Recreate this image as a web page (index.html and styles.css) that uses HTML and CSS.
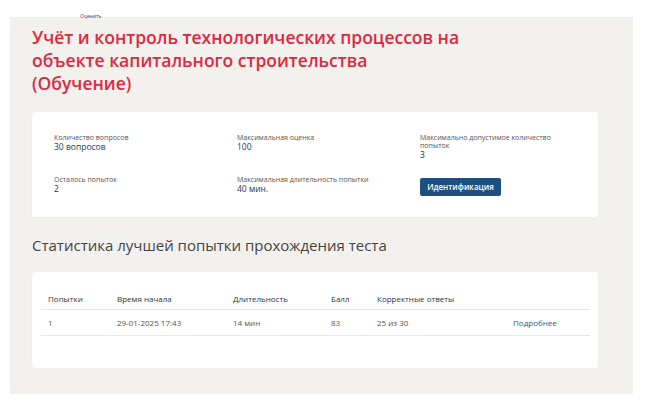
FILE: index.html
```html
<!DOCTYPE html>
<html lang="ru">
<head>
<meta charset="utf-8">
<title>Тест</title>
<link rel="stylesheet" href="styles.css">
</head>
<body>
<div class="topbar"><span class="rate">Оценить</span></div>
<main class="panel">
  <h1 class="title">Учёт и контроль технологических процессов на объекте капитального строительства (Обучение)</h1>
  <section class="card info">
    <div class="item">
      <div class="label">Количество вопросов</div>
      <div class="value">30 вопросов</div>
    </div>
    <div class="item">
      <div class="label">Максимальная оценка</div>
      <div class="value">100</div>
    </div>
    <div class="item">
      <div class="label">Максимально допустимое количество попыток</div>
      <div class="value">3</div>
    </div>
    <div class="item">
      <div class="label">Осталось попыток</div>
      <div class="value">2</div>
    </div>
    <div class="item">
      <div class="label">Максимальная длительность попытки</div>
      <div class="value">40 мин.</div>
    </div>
    <div class="item">
      <button class="btn">Идентификация</button>
    </div>
  </section>
  <h2 class="subtitle">Статистика лучшей попытки прохождения теста</h2>
  <section class="card stats">
    <table class="table">
      <thead>
        <tr>
          <th class="c1">Попытки</th>
          <th class="c2">Время начала</th>
          <th class="c3">Длительность</th>
          <th class="c4">Балл</th>
          <th class="c5">Корректные ответы</th>
          <th class="c6"></th>
        </tr>
      </thead>
      <tbody>
        <tr>
          <td>1</td>
          <td>29-01-2025 17:43</td>
          <td>14 мин</td>
          <td>83</td>
          <td>25 из 30</td>
          <td><a class="link" href="#">Подробнее</a></td>
        </tr>
      </tbody>
    </table>
  </section>
</main>
</body>
</html>
```
FILE: styles.css
```css
html, body {
  margin: 0;
  padding: 0;
  background: #ffffff;
}
body {
  font-family: "Open Sans", "Liberation Sans", sans-serif;
  color: #333;
  width: 650px;
  height: 413px;
  overflow: hidden;
}
.topbar {
  height: 17px;
  position: relative;
}
.rate {
  position: absolute;
  left: 80px;
  top: 13px;
  font-size: 5px;
  line-height: 6px;
  color: #2b4466;
}
.panel {
  margin-left: 10px;
  width: 623px;
  height: 377px;
  background: #f3f1ee;
  padding: 9px 35px 0 22px;
  box-sizing: border-box;
}
.title {
  margin: 0;
  font-size: 17.5px;
  line-height: 23px;
  font-weight: 600;
  color: #df2840;
  width: 432px;
}
.card {
  background: #fff;
  border-radius: 3px;
  box-shadow: 0 0 2px rgba(0,0,0,0.06);
}
.info {
  margin-top: 17px;
  height: 105px;
  box-sizing: border-box;
  padding: 22px 0 0 22px;
  display: grid;
  grid-template-columns: 183px 183px 160px;
  grid-template-rows: auto auto;
  row-gap: 13px;
  align-content: start;
}
.label {
  font-size: 7px;
  line-height: 8px;
  color: #555;
}
.value {
  font-size: 8.5px;
  line-height: 10px;
  font-weight: 500;
  color: #1f3556;
}
.item:nth-child(n+4) .label {
  margin-top: 3px;
}
.btn {
  font-family: inherit;
  font-size: 8px;
  font-weight: 600;
  color: #fff;
  background: #1d4f80;
  border: none;
  border-radius: 2px;
  width: 81px;
  height: 18px;
  padding: 0;
}
.subtitle {
  margin: 18px 0 0 0;
  font-size: 15px;
  line-height: 20px;
  font-weight: 400;
  color: #444;
}
.stats {
  margin-top: 17px;
  height: 96px;
  box-sizing: border-box;
  padding: 15px 8px 0 9px;
}
.table {
  width: 100%;
  border-collapse: collapse;
  font-size: 8px;
}
.table th {
  text-align: left;
  font-weight: 500;
  color: #333;
  height: 22px;
  padding: 0 0 0 7px;
  border-bottom: 1px solid #e6e6e6;
}
.table td {
  text-align: left;
  color: #555;
  height: 25px;
  padding: 0 0 0 7px;
  border-bottom: 1px solid #e6e6e6;
}
.c1 { width: 62px; }
.c2 { width: 109px; }
.c3 { width: 91px; }
.c4 { width: 39px; }
.c5 { width: 129px; }
.link {
  color: #2a5a8c;
  text-decoration: none;
}
```
